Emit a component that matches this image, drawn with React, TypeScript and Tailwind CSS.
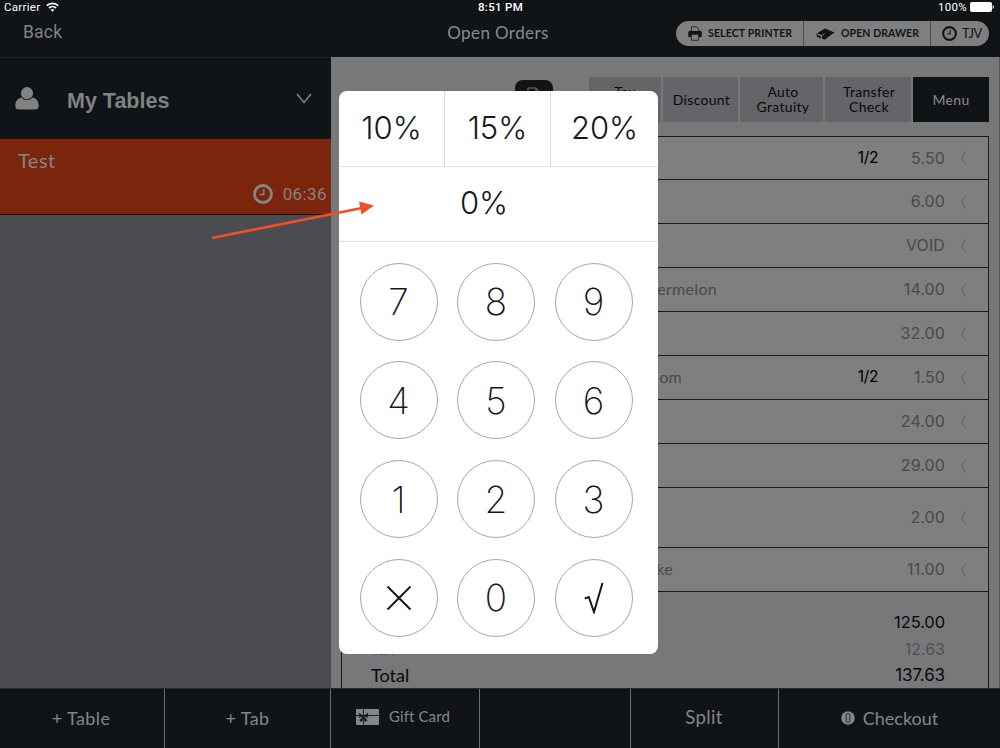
import React from "react"

interface Order {
  name?: string
  nameClass?: string
  part?: string
  price: string
  height: string
}

const orders: Order[] = [
  {part: "1/2", price: "5.50", height: "h-[43px]"},
  {price: "6.00", height: "h-11"},
  {price: "VOID", height: "h-11"},
  {name: "Watermelon", price: "14.00", height: "h-11"},
  {price: "32.00", height: "h-11"},
  {name: "Mushroom", nameClass: "mr-[35px]", part: "1/2", price: "1.50", height: "h-11"},
  {price: "24.00", height: "h-11"},
  {price: "29.00", height: "h-11"},
  {price: "2.00", height: "h-[60px]"},
  {name: "Cheesecake", nameClass: "mr-[44px]", price: "11.00", height: "h-11"},
]

const ClockIcon: React.FC<{className: string}> = ({className}) => (
  <svg className={className} fill="none" stroke="currentColor" viewBox="0 0 20 20">
    <circle cx="10" cy="10" r="8.5" strokeWidth="2.8" />
    <path d="M10.8 5v5.6H7" strokeWidth="1.5" />
  </svg>
)

const StatusBar: React.FC = () => (
  <div className="flex h-[14px] items-center justify-between pl-1 pr-1.5 font-['Roboto'] text-[11.5px] leading-none tracking-[0.3px] text-white">
    <div className="flex w-[200px] items-center gap-1.5">
      <span className="pt-px">Carrier</span>
      <svg className="h-[10px] w-[13px]" fill="none" stroke="white" strokeWidth="1.8" viewBox="0 0 13 10">
        <path d="M.8 3.7a8.1 8.1 0 0 1 11.4 0M3 6a5 5 0 0 1 7 0" />
        <path d="M6.5 9.8 4.7 7.9a2.6 2.6 0 0 1 3.6 0z" fill="white" stroke="none" />
      </svg>
    </div>
    <span className="pl-[3px] pt-px font-medium">8:51 PM</span>
    <div className="flex w-[200px] items-center justify-end gap-[3px]">
      <span className="pt-px">100%</span>
      <svg className="h-[10px] w-6" fill="white" viewBox="0 0 24 10">
        <rect height="10" rx="2" width="22" />
        <path d="M22.6 3c1.6.8 1.6 3.2 0 4z" />
      </svg>
    </div>
  </div>
)

const Header: React.FC = () => (
  <div className="flex h-[43px] items-start justify-between text-[#8a8b8c]">
    <span className="w-[314px] pl-[23px] pt-[10px] font-['Roboto'] text-[17.5px] leading-none tracking-[0.2px] text-[#818283]">
      Back
    </span>
    <span className="pl-[6px] pt-[10px] text-[17px] leading-none tracking-[0.4px]">Open Orders</span>
    <div className="flex w-[324px] justify-end pr-[11px] pt-[7px]">
      <div className="flex h-[25px] overflow-hidden rounded-full bg-[#7f7f7f] text-[10.5px] font-bold leading-none text-[#101417]">
        <div className="flex w-[128px] items-center gap-[6px] border-r border-[#4b4c4d] pl-3">
          <svg className="h-[15px] w-[14px] shrink-0" viewBox="0 0 14 15">
            <path d="M3.5 5V.8h5.200l2 2V5" fill="none" stroke="#2a2d2f" />
            <path d="M1.500 5h11q1.200 0 1.200 1.200V11H.3V6.200Q.3 5 1.500 5z" fill="#101417" />
            <path d="M3.500 8.500h7v5.800h-7z" fill="#7f7f7f" stroke="#2a2d2f" />
          </svg>
          <span className="whitespace-nowrap tracking-[0.15px]">SELECT PRINTER</span>
        </div>
        <div className="flex w-[127px] items-center gap-[6px] border-r border-[#4b4c4d] pl-3">
          <svg className="h-3 w-[19px] shrink-0" viewBox="0 0 19 12">
            <path d="M9 .4 18.500 4.500 8.500 11.800 6 10.500V8L1.500 6.200.5 7V5.500z" fill="#101417" />
            <path d="M.8 6.500v2l4 2.200V8.500z" fill="#101417" />
            <path d="m1.200 5.600 4.600 2.200 2.800-2.200" fill="none" stroke="#7f7f7f" strokeWidth="1" />
          </svg>
          <span className="whitespace-nowrap tracking-[0.1px]">OPEN DRAWER</span>
        </div>
        <div className="flex w-[58px] items-center gap-[5px] pl-[11px]">
          <ClockIcon className="h-[15px] w-[15px]" />
          <span className="text-[13px] font-normal tracking-tight">TJV</span>
        </div>
      </div>
    </div>
  </div>
)

const Sidebar: React.FC = () => (
  <aside className="flex w-[331px] shrink-0 flex-col bg-[#4b4c50]">
    <div className="flex h-[82px] items-center border-y border-y-[#1c2023] border-b-[#24170f] bg-[#101417] pl-[15px] pr-[19px] text-[#818283]">
      <svg className="h-[23px] w-6" fill="currentColor" viewBox="0 0 24 23">
        <path d="M6.2 10.500C2 11.600.3 15 .3 19c0 2.300 1.500 3.600 3.700 3.600h16c2.200 0 3.700-1.300 3.700-3.600 0-4-1.700-7.400-5.900-8.500A7.800 7.800 0 0 1 12 13a7.800 7.800 0 0 1-5.800-2.500z" />
        <circle cx="12" cy="6.200" r="6.100" />
      </svg>
      <span className="ml-7 mt-[7px] flex-1 font-['Liberation_Sans'] text-[21.5px] font-bold leading-none">
        My Tables
      </span>
      <svg className="mt-px h-[11px] w-[16px]" fill="none" stroke="currentColor" strokeWidth="1.5" viewBox="0 0 16 11">
        <path d="m1 1 7 8.500L15 1" />
      </svg>
    </div>
    <div className="flex h-[76px] flex-col justify-between border-b border-[#151110] bg-[#7a250c] pb-[10px] pl-[18px] pr-1 pt-[11px] text-[#858585]">
      <span className="text-[20px] leading-none tracking-[0.5px]">Test</span>
      <div className="flex items-center justify-end gap-[10px]">
        <ClockIcon className="h-5 w-5" />
        <span className="font-['Roboto'] text-[17px] leading-none tracking-[0.4px]">06:36</span>
      </div>
    </div>
  </aside>
)

const Actions: React.FC = () => (
  <div className="flex h-[79px] items-start justify-end pr-[10px] pt-5 text-center text-[14px] leading-[15px] tracking-[0.3px] text-[#08090a]">
    <div className="mr-[36px] mt-[3px] flex h-9 w-[38px] justify-center rounded-lg bg-[#101417] pt-[7px]">
      <svg className="h-4 w-[14px]" fill="none" stroke="#77787a" viewBox="0 0 14 16">
        <path d="M1 15V1h8l4 4v10M9 1v4h4" />
      </svg>
    </div>
    <div className="flex gap-[2px]">
      <div className="flex h-[45px] w-[72px] items-center justify-center bg-[#646569] pb-[2px]">
        <span>Tax<br />Exempt</span>
      </div>
      <div className="flex h-[45px] w-[75px] items-center justify-center bg-[#646569] pl-[2px]">Discount</div>
      <div className="flex h-[45px] w-[83px] items-center justify-center bg-[#646569] pb-[2px] pl-[3px]">
        <span>Auto<br />Gratuity</span>
      </div>
      <div className="flex h-[45px] w-[86px] items-center justify-center bg-[#646569] pb-[2px] pl-[2px]">
        <span>Transfer<br />Check</span>
      </div>
      <div className="flex h-[45px] w-[76px] items-center justify-center bg-[#101417] text-[#8a8b8c]">Menu</div>
    </div>
  </div>
)

const OrderList: React.FC = () => (
  <div className="ml-[10px] flex w-[648px] flex-1 flex-col border-x border-t border-[#17191b] text-[16px] leading-none tracking-[0.3px]">
    {orders.map((order) => (
      <div
        key={order.price}
        className={`${order.height} flex shrink-0 items-center border-b border-[#1a1b1c] bg-[#7f7f7f] pb-px pr-[21px] text-[#48494b]`}
      >
        <div className="flex w-[375px] justify-end">
          <span className={order.nameClass}>{order.name}</span>
        </div>
        <span className="flex-1 text-right font-['Inter'] text-[15.5px] tracking-tight text-black">{order.part}</span>
        <span className="w-[67px] text-right font-['Inter'] tracking-[0.1px]">{order.price}</span>
        <svg className="ml-[15px] mt-px h-[14px] w-[7px]" fill="none" stroke="#606164" viewBox="0 0 7 14">
          <path d="M5.500.5 1.500 7l4 6.500" />
        </svg>
      </div>
    ))}
    <div className="flex flex-1 flex-col pl-[29px] pr-[43px] pt-[22px] text-[17px] tracking-normal text-[#08090a]">
      <div className="flex justify-between">
        <span>Subtotal</span>
        <span className="font-['Inter'] text-[16.5px] tracking-[-0.1px]">125.00</span>
      </div>
      <div className="mt-[10px] flex justify-between text-[16px] text-[#505154]">
        <span>Tax</span>
        <span className="font-['Inter']">12.63</span>
      </div>
      <div className="mt-[9px] flex justify-between text-[18px]">
        <span>Total</span>
        <span className="pt-px font-['Inter'] text-[17px] tracking-[-0.1px]">137.63</span>
      </div>
    </div>
  </div>
)

const Footer: React.FC = () => (
  <footer className="flex h-[60px] shrink-0 border-t border-[#292c2e] bg-[#101417] text-[18px] leading-none tracking-[0.4px] text-[#858687]">
    <div className="flex w-[165px] items-center justify-center border-r border-[#6d6e70] pb-[2px] pr-[2px]">+ Table</div>
    <div className="flex w-[166px] items-center justify-center border-r border-[#6d6e70] pb-[2px]">+ Tab</div>
    <div className="flex w-[149px] items-center gap-[10px] border-r border-[#6d6e70] pb-[4px] pl-[25px] text-[15px]">
      <svg className="h-4 w-[23px]" viewBox="0 0 23 16">
        <rect fill="#858687" height="16" rx="1" width="23" />
        <path d="M0 6.500h23M7.500 0v16" stroke="#101417" strokeWidth="0.9" />
        <path d="m7 7-3.700-2.700v4zM8 7l3.700-2.700v4zM7 7.500l-3.200 4 2.200 1zM8 7.500l3.200 4-2.200 1z" fill="#101417" stroke="#101417" strokeWidth="0.6" />
      </svg>
      <span className="tracking-[0.1px]">Gift Card</span>
    </div>
    <div className="w-[151px] border-r border-[#6d6e70]" />
    <div className="flex w-[148px] items-center justify-center border-r border-[#6d6e70] pb-[2px] pr-px text-[18.5px]">Split</div>
    <div className="flex flex-1 items-center justify-center gap-2 pb-[2px] tracking-normal">
      <svg className="h-[14px] w-[14px]" viewBox="0 0 14 14">
        <circle cx="7" cy="7" fill="#858687" r="6.800" />
        <rect fill="none" height="8.400" rx="1" stroke="#25292b" width="3.600" x="5.200" y="2.800" />
      </svg>
      <span>Checkout</span>
    </div>
  </footer>
)

const keyClass =
  "flex size-[78px] items-center justify-center rounded-full border border-[#a4a6b0] text-[37px] font-extralight leading-none text-[#15181b]"

const PercentPad: React.FC = () => (
  <div className="absolute left-[339px] top-[91px] h-[563px] w-[319px] overflow-hidden rounded-lg bg-white font-['Inter'] font-light text-[#15191c]">
    <div className="flex h-[76px] border-b border-[#e3e4e7] text-[31px] leading-[73px]">
      <div className="w-[106px] border-r border-[#d5d7df] text-center">10%</div>
      <div className="w-[106px] border-r border-[#d5d7df] text-center">15%</div>
      <div className="flex-1 text-center">20%</div>
    </div>
    <div className="h-[75px] border-b border-[#dfe0e2] pr-[29px] text-center text-[31px] leading-[72px]">0%</div>
    <div className="grid grid-cols-[78px_78px_78px] gap-x-[19.5px] gap-y-[20.800px] pl-[20.500px] pt-[20.500px]">
      {["7", "8", "9", "4", "5", "6", "1", "2", "3"].map((digit) => (
        <button key={digit} className={keyClass}>
          {digit}
        </button>
      ))}
      <button className={keyClass}>
        <svg className="h-[26px] w-[26px]" stroke="currentColor" strokeWidth="2" viewBox="0 0 26 26">
          <path d="m1.500 1.500 23 23m0-23-23 23" />
        </svg>
      </button>
      <button className={keyClass}>0</button>
      <button className={keyClass}>
        <svg className="h-8 w-5" fill="none" stroke="currentColor" strokeWidth="2" viewBox="0 0 20 32">
          <path d="m.8 16.500 4-1.500 5.200 15L18.500 1" />
        </svg>
      </button>
    </div>
  </div>
)

const App: React.FC = () => {
  return (
    <main className="relative flex h-[748px] w-[1000px] flex-col overflow-hidden bg-[#101417] font-['Lato',sans-serif]">
      <StatusBar />
      <Header />
      <div className="flex min-h-0 flex-1">
        <Sidebar />
        <section className="flex flex-1 flex-col overflow-hidden border-r border-[#565759] bg-[#77787a]">
          <Actions />
          <OrderList />
        </section>
      </div>
      <Footer />
      <PercentPad />
      <svg className="absolute left-[210px] top-[195px] h-[48px] w-[170px]" viewBox="0 0 170 48">
        <path d="M2 43 152 13" stroke="#f24e29" strokeWidth="2.700" />
        <path d="m164 10.500-15-4 2.500 13z" fill="#f24e29" />
      </svg>
    </main>
  )
}

export default App
